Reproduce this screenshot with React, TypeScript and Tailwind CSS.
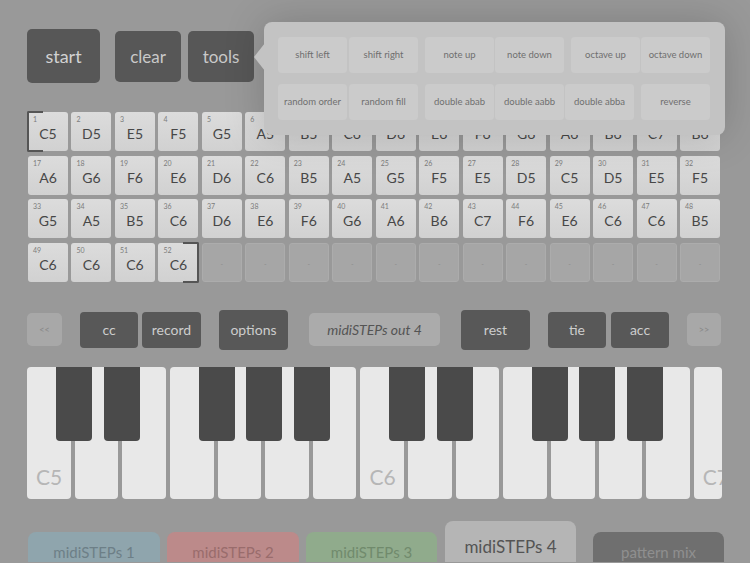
import React from "react";

const FONT = { fontFamily: "Lato, 'Noto Sans', sans-serif" };

const notes: string[] = [
  "C5","D5","E5","F5","G5","A5","B5","C6","D6","E6","F6","G6","A6","B6","C7","B6",
  "A6","G6","F6","E6","D6","C6","B5","A5","G5","F5","E5","D5","C5","D5","E5","F5",
  "G5","A5","B5","C6","D6","E6","F6","G6","A6","B6","C7","F6","E6","C6","C6","B5",
  "C6","C6","C6","C6",
];

const blackLefts = [29, 77, 172, 219, 267, 362, 410, 505, 552, 600];

function Cell({ i }: { i: number }) {
  const note = notes[i];
  if (!note) {
    return (
      <div className="h-[39px] rounded-[3px] bg-[#a6a6a6] border border-[#acacac] flex items-center justify-center">
        <span className="text-[7px] text-[#8c8c8c] mt-[4px]">-</span>
      </div>
    );
  }
  return (
    <div className="relative h-[39px] rounded-[3px] bg-gradient-to-b from-[#dcdcdc] to-[#d1d1d1] flex flex-col pt-[3px] px-[5px]">
      <span className="text-[7px] leading-[8px] text-[#7c7c7c]">{i + 1}</span>
      <span className="text-[14px] leading-[18px] text-center text-[#474747] mt-[2px]">{note}</span>
      {i === 0 && (
        <span className="absolute left-[-1px] top-[-1px] w-[16px] h-[41px] border-l-2 border-y-2 border-[#555] rounded-l-[2px]" />
      )}
      {i === 51 && (
        <span className="absolute right-[-1px] top-[-1px] w-[16px] h-[41px] border-r-2 border-y-2 border-[#555] rounded-r-[2px]" />
      )}
    </div>
  );
}

function PopBtn({ label, className = "" }: { label: string; className?: string }) {
  return (
    <div className={`w-[69px] h-[36px] shrink-0 rounded-[4px] bg-[#cbcbcb] flex items-center justify-center text-[9.5px] text-[#6f6f6f] whitespace-nowrap ${className}`}>
      {label}
    </div>
  );
}

export default function App() {
  const whites = ["C5", "", "", "", "", "", "", "C6", "", "", "", "", "", "", "C7"];
  return (
    <div className="relative w-[750px] h-[563px] overflow-hidden bg-[#999999]" style={FONT}>
      {/* top buttons */}
      <div className="flex items-start pl-[27px] pt-[29px] h-[112px]">
        <div className="w-[73px] h-[54px] rounded-[5px] bg-[#575757] flex items-center justify-center text-[18px] text-[#d2d2d2]">start</div>
        <div className="ml-[15px] mt-[2px] w-[66px] h-[51px] rounded-[5px] bg-[#575757] flex items-center justify-center text-[17px] text-[#c9c9c9]">clear</div>
        <div className="ml-[7px] mt-[2px] w-[66px] h-[51px] rounded-[5px] bg-[#575757] flex items-center justify-center text-[17px] text-[#c9c9c9]">tools</div>
      </div>

      {/* step grid */}
      <div className="ml-[28px] w-[692px] grid grid-cols-16 gap-x-[3.5px] gap-y-[4.5px]">
        {Array.from({ length: 64 }).map((_, i) => (
          <Cell key={i} i={i} />
        ))}
      </div>

      {/* control row */}
      <div className="mt-[28px] h-[40px] flex items-center text-[14px]">
        <div className="ml-[27px] w-[35px] h-[33px] rounded-[5px] bg-[#a8a8a8] flex items-center justify-center text-[9px] text-[#878787]">&lt;&lt;</div>
        <div className="ml-[18px] w-[58px] h-[36px] rounded-[4px] bg-[#585858] flex items-center justify-center text-[#cdcdcd]">cc</div>
        <div className="ml-[4px] w-[59px] h-[36px] rounded-[4px] bg-[#585858] flex items-center justify-center text-[#cdcdcd]">record</div>
        <div className="ml-[18px] w-[69px] h-[40px] rounded-[4px] bg-[#585858] flex items-center justify-center text-[#cdcdcd]">options</div>
        <div className="ml-[21px] w-[131px] h-[33px] rounded-[5px] bg-[#ababab] flex items-center justify-center italic text-[#545454]">midiSTEPs out 4</div>
        <div className="ml-[21px] w-[69px] h-[40px] rounded-[4px] bg-[#585858] flex items-center justify-center text-[#cdcdcd]">rest</div>
        <div className="ml-[18px] w-[58px] h-[36px] rounded-[4px] bg-[#585858] flex items-center justify-center text-[#cdcdcd]">tie</div>
        <div className="ml-[5px] w-[58px] h-[36px] rounded-[4px] bg-[#585858] flex items-center justify-center text-[#cdcdcd]">acc</div>
        <div className="ml-[18px] w-[34px] h-[33px] rounded-[5px] bg-[#a8a8a8] flex items-center justify-center text-[9px] text-[#878787]">&gt;&gt;</div>
      </div>

      {/* keyboard */}
      <div className="relative ml-[27px] mt-[17px] w-[695px] h-[132px] overflow-hidden">
        <div className="flex gap-[4px] h-full">
          {whites.map((l, i) => (
            <div
              key={i}
              className={`${i === 14 ? "w-[28px]" : "w-[43.64px]"} shrink-0 h-full rounded-[4px] bg-[#e8e8e8] flex flex-col justify-end pl-[9px] pb-[10px] overflow-hidden`}
            >
              <span className="text-[21px] leading-[24px] text-[#b6b6b6] whitespace-nowrap">{l}</span>
            </div>
          ))}
        </div>
        {blackLefts.map((left, i) => (
          <div
            key={i}
            className="absolute top-0 w-[36px] h-[74px] rounded-b-[4px] bg-[#4a4a4a]"
            style={{ left }}
          />
        ))}
      </div>

      {/* tabs */}
      <div className="mt-[22px] h-[41px] flex items-end">
        <div className="ml-[28px] w-[132px] h-[30px] rounded-t-[8px] bg-[#8fa5ad] flex justify-center pt-[9px] text-[15px] text-[#6d7f87]">midiSTEPs 1</div>
        <div className="ml-[7px] w-[132px] h-[30px] rounded-t-[8px] bg-[#bc8a8a] flex justify-center pt-[9px] text-[15px] text-[#996c6c]">midiSTEPs 2</div>
        <div className="ml-[7px] w-[131px] h-[30px] rounded-t-[8px] bg-[#90ab8c] flex justify-center pt-[9px] text-[15px] text-[#708a6c]">midiSTEPs 3</div>
        <div className="ml-[8px] w-[131px] h-[41px] rounded-t-[8px] bg-[#b5b5b5] flex justify-center pt-[13px] text-[17px] text-[#545454]">midiSTEPs 4</div>
        <div className="ml-[17px] w-[131px] h-[30px] rounded-t-[8px] bg-[#6f6f6f] flex justify-center pt-[9px] text-[15px] text-[#8f8f8f]">pattern mix</div>
      </div>

      {/* tools popover */}
      <div className="absolute left-[264px] top-[22px] w-[461px] h-[113px] rounded-[8px] bg-[#c3c3c3] shadow-[0_0_40px_rgba(0,0,0,0.18)] pt-[15px] pl-[14px]">
        <svg className="absolute left-[-10px] top-[21px]" width="11" height="28" viewBox="0 0 11 28">
          <path d="M11 0 L0 14 L11 28 Z" fill="#c3c3c3" />
        </svg>
        <div className="flex">
          <PopBtn label="shift left" />
          <PopBtn label="shift right" className="ml-[2px]" />
          <PopBtn label="note up" className="ml-[7px]" />
          <PopBtn label="note down" className="ml-[1px]" />
          <PopBtn label="octave up" className="ml-[7px]" />
          <PopBtn label="octave down" className="ml-[1px]" />
        </div>
        <div className="flex mt-[11px]">
          <PopBtn label="random order" />
          <PopBtn label="random fill" className="ml-[2px]" />
          <PopBtn label="double abab" className="ml-[7px]" />
          <PopBtn label="double aabb" className="ml-[1px]" />
          <PopBtn label="double abba" className="ml-[1px]" />
          <PopBtn label="reverse" className="ml-[7px]" />
        </div>
      </div>
    </div>
  );
}
